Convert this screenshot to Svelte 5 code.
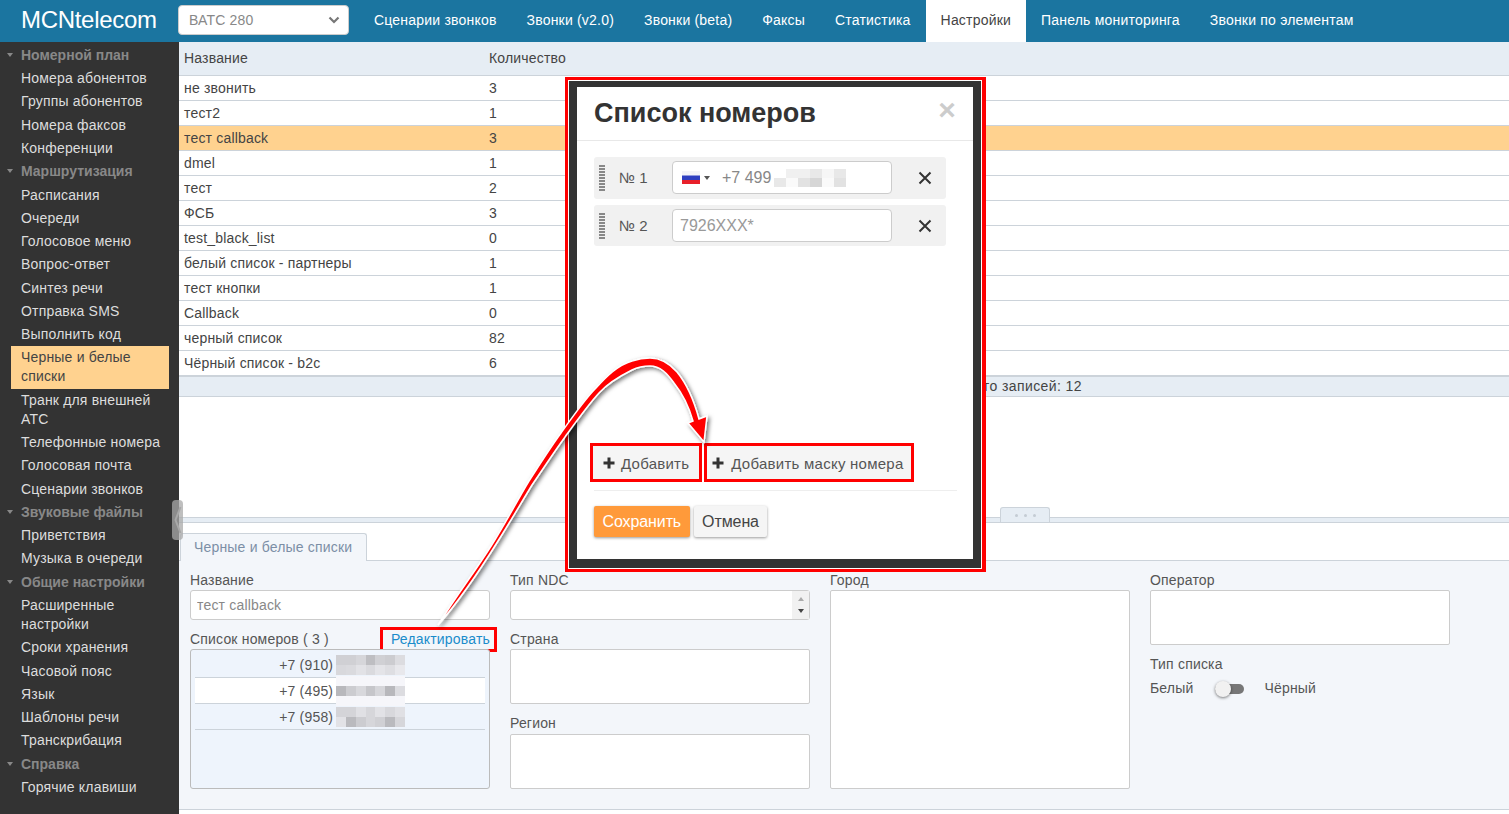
<script>
  const navTabs = [
    { name: "Сценарии звонков" },
    { name: "Звонки (v2.0)" },
    { name: "Звонки (beta)" },
    { name: "Факсы" },
    { name: "Статистика" },
    { name: "Настройки", active: true },
    { name: "Панель мониторинга" },
    { name: "Звонки по элементам" }
  ];

  const sideGroups = [
    {
      title: "Номерной план",
      items: ["Номера абонентов", "Группы абонентов", "Номера факсов", "Конференции"]
    },
    {
      title: "Маршрутизация",
      items: [
        "Расписания",
        "Очереди",
        "Голосовое меню",
        "Вопрос-ответ",
        "Синтез речи",
        "Отправка SMS",
        "Выполнить код",
        "Черные и белые списки",
        "Транк для внешней АТС",
        "Телефонные номера",
        "Голосовая почта",
        "Сценарии звонков"
      ]
    },
    { title: "Звуковые файлы", items: ["Приветствия", "Музыка в очереди"] },
    {
      title: "Общие настройки",
      items: ["Расширенные настройки", "Сроки хранения", "Часовой пояс", "Язык", "Шаблоны речи", "Транскрибация"]
    },
    { title: "Справка", items: ["Горячие клавиши"] }
  ];

  const rows = [
    ["не звонить", 3],
    ["тест2", 1],
    ["тест callback", 3],
    ["dmel", 1],
    ["тест", 2],
    ["ФСБ", 3],
    ["test_black_list", 0],
    ["белый список - партнеры", 1],
    ["тест кнопки", 1],
    ["Callback", 0],
    ["черный список", 82],
    ["Чёрный список - b2c", 6]
  ];

  // blurred digits, one gray per 10px cell
  const phones = [
    { code: "+7 (910)", cells: [[208, 208, 214, 190, 208, 204, 220], [216, 218, 226, 218, 228, 222, 232]] },
    { code: "+7 (495)", cells: [[246, 246, 246, 246, 246, 246, 246], [184, 204, 216, 198, 214, 184, 220], [246, 246, 246, 246, 246, 246, 246]] },
    { code: "+7 (958)", cells: [[212, 212, 224, 214, 226, 216, 224], [226, 186, 204, 214, 208, 186, 214]] }
  ];
  const hidden = [
    [255, 240, 240, 232, 246, 232],
    [232, 250, 226, 214, 250, 226]
  ];
</script>

<div class="page">
  <header class="topbar">
    <div class="logo">MCNtelecom</div>
    <div class="vats">
      <span>ВАТС 280</span>
      <svg width="12" height="8" viewBox="0 0 12 8"><path d="M1.500 1.500 6 6l4.500-4.500" fill="none" stroke="#777" stroke-width="2.200" /></svg>
    </div>
    <nav class="tabs">
      {#each navTabs as tab}
        <a class="tab" class:active={tab.active} href="/">{tab.name}</a>
      {/each}
    </nav>
  </header>

  <div class="body">
    <aside class="side">
      {#each sideGroups as group}
        <div class="side-title"><i class="caret"></i>{group.title}</div>
        {#each group.items as item}
          <div class="side-item" class:current={item === "Черные и белые списки"}>{item}</div>
        {/each}
      {/each}
    </aside>

    <main class="main">
      <section class="grid">
        <div class="row head"><span>Название</span><span>Количество</span></div>
        {#each rows as row}
          <div class="row" class:selected={row[0] === "тест callback"}>
            <span>{row[0]}</span><span>{row[1]}</span>
          </div>
        {/each}
        <div class="summary">Всего записей: 12</div>
      </section>

      <div class="splitter">
        <div class="split-tab"><i></i><i></i><i></i></div>
      </div>

      <section class="details">
        <div class="detail-tabs"><div class="detail-tab">Черные и белые списки</div></div>
        <div class="form">
          <div class="col">
            <label class="lbl" for="nm">Название</label>
            <input id="nm" class="field" value="тест callback" />
            <div class="lbl-row">
              <span class="lbl">Список номеров ( 3 )</span>
              <a class="edit" href="/">Редактировать</a>
            </div>
            <div class="numbers">
              {#each phones as phone}
                <div class="num">
                  <span>{phone.code}</span>
                  <div class="blur">
                    {#each phone.cells as line}
                      <div class="blur-line">
                        {#each line as g}
                          <b style="background: rgb({g},{g},{g + 4})"></b>
                        {/each}
                      </div>
                    {/each}
                  </div>
                </div>
              {/each}
            </div>
          </div>
          <div class="col">
            <span class="lbl">Тип NDC</span>
            <div class="field spin">
              <div class="spinner"><i class="up"></i><i class="down"></i></div>
            </div>
            <span class="lbl second">Страна</span>
            <div class="box"></div>
            <span class="lbl second region">Регион</span>
            <div class="box"></div>
          </div>
          <div class="col">
            <span class="lbl">Город</span>
            <div class="box tall"></div>
          </div>
          <div class="col">
            <span class="lbl">Оператор</span>
            <div class="box"></div>
            <span class="lbl second">Тип списка</span>
            <div class="switch-row">
              <span>Белый</span>
              <div class="switch"><i></i></div>
              <span>Чёрный</span>
            </div>
          </div>
        </div>
      </section>
    </main>
  </div>

  <div class="side-handle">
    <svg width="8" height="28" viewBox="0 0 8 28"><path d="M6.500 1 1.500 14l5 13" fill="none" stroke="#a8a8a8" stroke-width="2" /></svg>
  </div>

  <div class="modal-frame">
    <div class="modal">
      <div class="modal-head">
        <h2>Список номеров</h2>
        <span class="close">×</span>
      </div>
      <div class="modal-body">
        <div class="entry first">
          <i class="grip"></i>
          <span class="entry-no">№ 1</span>
          <div class="phone">
            <svg class="flag" width="18" height="13" viewBox="0 0 18 13">
              <rect width="18" height="4.500" fill="#f4f4f8" />
              <rect y="4.500" width="18" height="4.500" fill="#2f3fc0" />
              <rect y="9" width="18" height="4" fill="#e8202a" />
            </svg>
            <i class="flag-caret"></i>
            <span>+7 499</span>
            <div class="blur small">
              {#each hidden as line}
                <div class="blur-line">
                  {#each line as g}
                    <b style="background: rgb({g},{g},{g})"></b>
                  {/each}
                </div>
              {/each}
            </div>
          </div>
          <svg class="del" width="14" height="14" viewBox="0 0 14 14"><path d="M1.500 1.500l11 11M12.500 1.500l-11 11" stroke="#333" stroke-width="2" /></svg>
        </div>
        <div class="entry">
          <i class="grip"></i>
          <span class="entry-no">№ 2</span>
          <input class="phone mask" placeholder="7926XXX*" />
          <svg class="del" width="14" height="14" viewBox="0 0 14 14"><path d="M1.500 1.500l11 11M12.500 1.500l-11 11" stroke="#333" stroke-width="2" /></svg>
        </div>
      </div>
      <div class="adders">
        <button class="adder"><svg width="12" height="12" viewBox="0 0 12 12"><path d="M6 0.500v11M0.500 6h11" stroke="#333" stroke-width="3" /></svg>Добавить</button>
        <button class="adder mask-btn"><svg width="12" height="12" viewBox="0 0 12 12"><path d="M6 0.500v11M0.500 6h11" stroke="#333" stroke-width="3" /></svg>Добавить маску номера</button>
      </div>
      <div class="actions">
        <button class="save">Сохранить</button>
        <button class="cancel">Отмена</button>
      </div>
    </div>
  </div>

  <svg class="arrow" width="1509" height="814" viewBox="0 0 1509 814">
    <defs>
      <filter id="arrow-shadow" x="-10%" y="-10%" width="130%" height="130%">
        <feDropShadow dx="2" dy="2" stdDeviation="2" flood-color="#000" flood-opacity="0.55" />
      </filter>
    </defs>
    <path
      d="M438 625C460 590 480 565 496 538C508 519 518 499 529 481C540 464 550 448 561 433C572 418 584 400 596 388C607 376 618 365 632 361C638 359 644 358 650 358C662 358 670 364 677 372C686 383 693 397 699 419L707 416L704 442L688 423L693 421C689 407 682 393 674 383C667 373 660 366 650 366C644 366 638 367 632 370C620 376 609 382 599 393C587 406 576 422 565 437C554 452 543 469 532 485C521 503 510 522 498 541C480 570 460 600 438 625Z"
      fill="#f00"
      stroke="#fff"
      stroke-width="1.500"
      filter="url(#arrow-shadow)"
    />
  </svg>
</div>

<style>
  :global(body) {
    margin: 0;
    background: #fff;
  }

  .page {
    position: relative;
    width: 1509px;
    height: 814px;
    overflow: hidden;
    font-family: "Liberation Sans", Arial, sans-serif;
    font-size: 14px;
    letter-spacing: 0.18px;
    color: #444;
  }

  .topbar {
    display: flex;
    align-items: center;
    height: 42px;
    background: #1b75a0;
  }

  .logo {
    width: 178px;
    margin-bottom: 2px;
    padding-left: 21px;
    box-sizing: border-box;
    color: #fff;
    font-size: 24px;
    letter-spacing: -0.3px;
  }

  .vats {
    display: flex;
    align-items: center;
    justify-content: space-between;
    box-sizing: border-box;
    width: 171px;
    height: 30px;
    margin-bottom: 2px;
    padding: 0 8px 0 10px;
    background: #fff;
    border: 1px solid #ccc;
    border-radius: 4px;
    color: #888;
  }

  .tabs {
    display: flex;
    margin-left: 10px;
  }

  .tab {
    height: 42px;
    padding: 0 15px;
    line-height: 40px;
    letter-spacing: 0.2px;
    color: #fff;
    text-decoration: none;
  }

  .tab.active {
    background: #fff;
    color: #444;
  }

  .body {
    display: flex;
    height: 772px;
  }

  .side {
    flex: 0 0 179px;
    box-sizing: border-box;
    padding: 1.700px 10px 0 11px;
    background: #333;
    color: #ddd;
  }

  .side-title {
    position: relative;
    padding: 2.150px 0 2.150px 10px;
    line-height: 19px;
    font-weight: bold;
    letter-spacing: 0;
    color: #888;
  }

  .caret {
    position: absolute;
    left: -4px;
    top: 9px;
    border: 3.500px solid transparent;
    border-top: 4px solid #888;
    border-bottom: 0;
  }

  .side-item {
    padding: 2.150px 0 2.150px 10px;
    line-height: 19px;
  }

  .side-item.current {
    background: #ffd28f;
    color: #444;
  }

  .main {
    flex: 1;
    min-width: 0;
    display: flex;
    flex-direction: column;
  }

  .grid {
    height: 475px;
    box-sizing: border-box;
  }

  .row {
    display: grid;
    grid-template-columns: 305px 1fr;
    box-sizing: border-box;
    height: 25px;
    padding-left: 5px;
    line-height: 24px;
    border-bottom: 1px solid #ccd3da;
    color: #444;
  }

  .row.head {
    height: 34px;
    line-height: 33px;
    background: #e6edf4;
  }

  .row.selected {
    background: #ffd28f;
  }

  .summary {
    box-sizing: border-box;
    height: 22px;
    margin-top: -1px;
    padding-left: 780px;
    line-height: 19px;
    letter-spacing: 0.4px;
    background: #e6edf4;
    border-top: 2px solid #ccd3da;
    border-bottom: 1px solid #ccd3da;
  }

  .splitter {
    position: relative;
    height: 6px;
    box-sizing: border-box;
    background: #e6edf4;
    border-top: 1px solid #ccd3da;
    border-bottom: 1px solid #ccd3da;
  }

  .split-tab {
    position: absolute;
    left: 821px;
    top: -11px;
    display: flex;
    align-items: center;
    justify-content: center;
    gap: 6px;
    box-sizing: border-box;
    width: 50px;
    height: 15px;
    background: #e6edf4;
    border: 1px solid #ccd3da;
    border-bottom: 0;
    border-radius: 3px 3px 0 0;
  }

  .split-tab i {
    width: 3px;
    height: 3px;
    border-radius: 50%;
    background: #c4ccd4;
  }

  .details {
    padding-top: 10px;
  }

  .detail-tabs {
    display: flex;
    height: 28px;
    box-sizing: border-box;
    border-bottom: 1px solid #ccd3da;
    padding-left: 1px;
  }

  .detail-tab {
    box-sizing: border-box;
    height: 28px;
    padding: 0 14px 0 13px;
    line-height: 27px;
    color: #7c8fa6;
    background: #f3f6fa;
    border: 1px solid #ccd3da;
    border-bottom: 0;
    border-radius: 3px 3px 0 0;
  }

  .form {
    display: grid;
    grid-template-columns: repeat(4, 300px);
    column-gap: 20px;
    box-sizing: border-box;
    height: 249px;
    padding: 10px 0 0 11px;
    background: #f3f6fa;
    border-bottom: 1px solid #ccd3da;
  }

  .col {
    display: flex;
    flex-direction: column;
    align-items: stretch;
  }

  .lbl {
    display: block;
    height: 19px;
    line-height: 19px;
    color: #555;
  }

  .lbl.second {
    margin-top: 10px;
  }

  .lbl.region {
    height: 20px;
  }

  .field {
    box-sizing: border-box;
    width: 300px;
    height: 30px;
    padding: 0 6px;
    background: #fff;
    border: 1px solid #ccc;
    border-radius: 3px;
    font: inherit;
    letter-spacing: inherit;
    color: #888;
    outline: 0;
  }

  .spin {
    display: flex;
    justify-content: flex-end;
    padding: 0;
  }

  .spinner {
    display: flex;
    flex-direction: column;
    align-items: center;
    justify-content: center;
    gap: 8px;
    width: 17px;
    background: #f1f1f1;
  }

  .up,
  .down {
    border: 3.500px solid transparent;
  }

  .up {
    border-top: 0;
    border-bottom: 4px solid #aaa;
  }

  .down {
    border-bottom: 0;
    border-top: 4px solid #444;
  }

  .lbl-row {
    display: flex;
    justify-content: space-between;
    margin-top: 10px;
    height: 19px;
    line-height: 19px;
  }

  .edit {
    margin-right: -4px;
    padding: 0 4px 0 8px;
    color: #1a8ccb;
    text-decoration: none;
    outline: 3px solid #f00;
  }

  .numbers {
    box-sizing: border-box;
    height: 140px;
    padding: 2px 4px 0;
    background: #eef4fc;
    border: 1px solid #bbb;
    border-radius: 3px;
  }

  .num {
    display: flex;
    align-items: center;
    justify-content: center;
    gap: 3px;
    height: 26px;
    box-sizing: border-box;
    border-bottom: 1px solid #ccd3da;
    color: #555;
    padding-left: 4px;
  }

  .num:nth-child(2) {
    background: #fff;
  }

  .blur {
    display: flex;
    flex-direction: column;
  }

  .blur-line {
    display: flex;
  }

  .blur b {
    display: block;
    width: 9.800px;
    height: 10px;
  }

  .blur.small b {
    width: 12px;
    height: 9px;
  }

  .box {
    box-sizing: border-box;
    height: 55px;
    background: #fff;
    border: 1px solid #ccc;
    border-radius: 2px;
  }

  .box.tall {
    height: 199px;
  }

  .switch-row {
    display: flex;
    align-items: center;
    gap: 22px;
    margin-top: 5px;
    color: #555;
    line-height: 19px;
  }

  .switch {
    position: relative;
    width: 29px;
    height: 10px;
    margin-right: -2px;
    background: #777;
    border-radius: 5px;
  }

  .switch i {
    position: absolute;
    left: 0;
    top: -3px;
    width: 16px;
    height: 16px;
    border-radius: 50%;
    background: #f1f1f1;
    box-shadow: 0 1px 3px rgba(0, 0, 0, 0.5);
  }

  .side-handle {
    position: absolute;
    left: 172px;
    top: 500px;
    display: flex;
    align-items: center;
    justify-content: center;
    width: 11px;
    height: 40px;
    background: rgba(170, 170, 170, 0.75);
    border-radius: 4px;
  }

  .modal-frame {
    position: absolute;
    left: 565px;
    top: 77px;
    box-sizing: border-box;
    width: 421px;
    height: 495px;
    padding: 1px;
    border: 3px solid #f00;
    border-right-width: 4px;
    background: #fff;
  }

  .modal {
    box-sizing: border-box;
    display: flex;
    flex-direction: column;
    height: 100%;
    background: #fff;
    border: solid #333;
    border-width: 6px 8px 9px;
  }

  .modal-head {
    display: flex;
    align-items: center;
    justify-content: space-between;
    box-sizing: border-box;
    height: 54px;
    padding: 0 17px 0 17px;
    border-bottom: 1px solid #e8e8e8;
  }

  h2 {
    margin: 0;
    font-size: 27px;
    font-weight: bold;
    letter-spacing: 0;
    color: #333;
  }

  .close {
    margin-top: -8px;
    font-size: 30px;
    font-weight: bold;
    line-height: 30px;
    color: #ccc;
  }

  .modal-body {
    flex: 1;
    padding: 16px 27px 0 17px;
  }

  .entry {
    display: flex;
    align-items: center;
    box-sizing: border-box;
    height: 41px;
    margin-bottom: 6px;
    padding-left: 5px;
    background: #f1f1f1;
    border-radius: 3px;
  }

  .entry.first {
    height: 42px;
    padding-bottom: 1px;
  }

  .grip {
    width: 6px;
    height: 26px;
    margin-right: 1px;
    background-image: linear-gradient(90deg, transparent 42%, #f1f1f1 42% 58%, transparent 58%),
      repeating-linear-gradient(#888 0 2px, transparent 2px 3px);
  }

  .entry-no {
    width: 53px;
    margin-left: 13px;
    font-size: 15px;
    letter-spacing: 0;
    color: #555;
  }

  .phone {
    display: flex;
    align-items: center;
    box-sizing: border-box;
    width: 220px;
    height: 33px;
    padding-left: 9px;
    background: #fff;
    border: 1px solid #ccc;
    border-radius: 4px;
    font: inherit;
    color: #888;
    outline: 0;
  }

  .phone.mask {
    padding-left: 7px;
    font-size: 16px;
    letter-spacing: 0;
  }

  .phone.mask::placeholder {
    color: #999;
  }

  .phone span {
    margin-left: 12px;
    font-size: 16px;
    letter-spacing: 0;
  }

  .flag-caret {
    margin-left: 4px;
    border: 3px solid transparent;
    border-top: 4px solid #555;
    border-bottom: 0;
  }

  .blur.small {
    margin-left: 3px;
  }

  .del {
    margin-left: 26px;
  }

  .adders {
    display: flex;
    gap: 8px;
    padding: 0 0 11px 16px;
  }

  .adder {
    display: flex;
    align-items: center;
    gap: 6px;
    box-sizing: border-box;
    height: 33px;
    padding: 1px 10px 0;
    background: #f5f5f5;
    border: 0;
    outline: 3px solid #f00;
    font: inherit;
    font-size: 15px;
    letter-spacing: 0.25px;
    color: #555;
  }

  .adder.mask-btn {
    padding: 1px 7px 0 5px;
    gap: 7px;
  }

  .actions {
    display: flex;
    gap: 4px;
    margin: 0 16px 0 17px;
    padding: 15px 0 22px;
    border-top: 1px solid #eee;
  }

  .save,
  .cancel {
    height: 31px;
    padding: 0 8.500px;
    border: 0;
    border-radius: 2px;
    font: inherit;
    font-size: 16px;
    letter-spacing: -0.1px;
    box-shadow: 0 1px 3px rgba(0, 0, 0, 0.4);
  }

  .save {
    background: #ff9a3a;
    color: #fff;
  }

  .cancel {
    background: #f5f5f5;
    color: #444;
  }

  .arrow {
    position: absolute;
    left: 0;
    top: 0;
    pointer-events: none;
  }
</style>
